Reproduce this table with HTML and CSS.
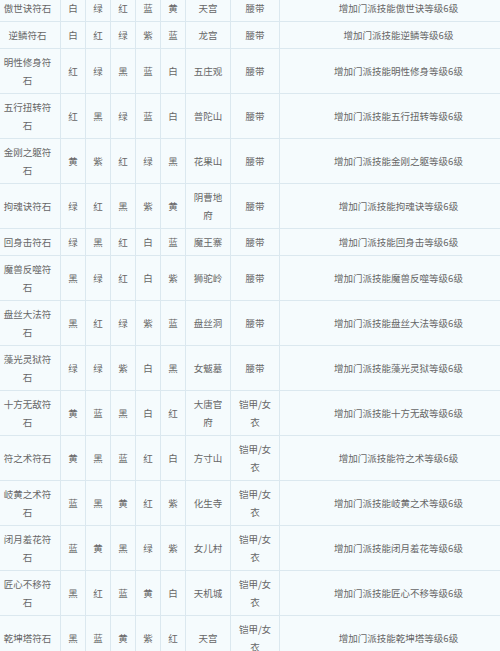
FILE: index.html
```html
<!DOCTYPE html>
<html lang="zh-CN">
<head>
<meta charset="utf-8">
<title>符石组合</title>
<link rel="stylesheet" href="styles.css">
</head>
<body>
<div class="wrap">
<table class="runes">
<colgroup>
<col class="c-name"><col class="c-color"><col class="c-color"><col class="c-color"><col class="c-color"><col class="c-color"><col class="c-sect"><col class="c-part"><col class="c-effect">
</colgroup>
<tbody>
<tr><td>傲世诀符石</td><td>白</td><td>绿</td><td>红</td><td>蓝</td><td>黄</td><td>天宫</td><td>腰带</td><td>增加门派技能傲世诀等级6级</td></tr>
<tr><td>逆鳞符石</td><td>白</td><td>红</td><td>绿</td><td>紫</td><td>蓝</td><td>龙宫</td><td>腰带</td><td>增加门派技能逆鳞等级6级</td></tr>
<tr><td>明性修身符石</td><td>红</td><td>绿</td><td>黑</td><td>蓝</td><td>白</td><td>五庄观</td><td>腰带</td><td>增加门派技能明性修身等级6级</td></tr>
<tr><td>五行扭转符石</td><td>红</td><td>黑</td><td>绿</td><td>蓝</td><td>白</td><td>普陀山</td><td>腰带</td><td>增加门派技能五行扭转等级6级</td></tr>
<tr><td>金刚之躯符石</td><td>黄</td><td>紫</td><td>红</td><td>绿</td><td>黑</td><td>花果山</td><td>腰带</td><td>增加门派技能金刚之躯等级6级</td></tr>
<tr><td>拘魂诀符石</td><td>绿</td><td>红</td><td>黑</td><td>紫</td><td>黄</td><td>阴曹地府</td><td>腰带</td><td>增加门派技能拘魂诀等级6级</td></tr>
<tr><td>回身击符石</td><td>绿</td><td>黑</td><td>红</td><td>白</td><td>蓝</td><td>魔王寨</td><td>腰带</td><td>增加门派技能回身击等级6级</td></tr>
<tr><td>魔兽反噬符石</td><td>黑</td><td>绿</td><td>红</td><td>白</td><td>紫</td><td>狮驼岭</td><td>腰带</td><td>增加门派技能魔兽反噬等级6级</td></tr>
<tr><td>盘丝大法符石</td><td>黑</td><td>红</td><td>绿</td><td>紫</td><td>蓝</td><td>盘丝洞</td><td>腰带</td><td>增加门派技能盘丝大法等级6级</td></tr>
<tr><td>藻光灵狱符石</td><td>绿</td><td>绿</td><td>紫</td><td>白</td><td>黑</td><td>女魃墓</td><td>腰带</td><td>增加门派技能藻光灵狱等级6级</td></tr>
<tr><td>十方无敌符石</td><td>黄</td><td>蓝</td><td>黑</td><td>白</td><td>红</td><td>大唐官府</td><td>铠甲/女衣</td><td>增加门派技能十方无敌等级6级</td></tr>
<tr><td>符之术符石</td><td>黄</td><td>黑</td><td>蓝</td><td>红</td><td>白</td><td>方寸山</td><td>铠甲/女衣</td><td>增加门派技能符之术等级6级</td></tr>
<tr><td>岐黄之术符石</td><td>蓝</td><td>黑</td><td>黄</td><td>红</td><td>紫</td><td>化生寺</td><td>铠甲/女衣</td><td>增加门派技能岐黄之术等级6级</td></tr>
<tr><td>闭月羞花符石</td><td>蓝</td><td>黄</td><td>黑</td><td>绿</td><td>紫</td><td>女儿村</td><td>铠甲/女衣</td><td>增加门派技能闭月羞花等级6级</td></tr>
<tr><td>匠心不移符石</td><td>黑</td><td>红</td><td>蓝</td><td>黄</td><td>白</td><td>天机城</td><td>铠甲/女衣</td><td>增加门派技能匠心不移等级6级</td></tr>
<tr><td>乾坤塔符石</td><td>黑</td><td>蓝</td><td>黄</td><td>紫</td><td>红</td><td>天宫</td><td>铠甲/女衣</td><td>增加门派技能乾坤塔等级6级</td></tr>
</tbody>
</table>
</div>
</body>
</html>
```
FILE: styles.css
```css
html, body {
  margin: 0;
  padding: 0;
  background: #f5fbfd;
}
.wrap {
  width: 500px;
  height: 651px;
  overflow: hidden;
}
.runes {
  margin: -6px 0 0 -6px;
  width: 523px;
  table-layout: fixed;
  border-collapse: collapse;
  font-family: "Noto Sans CJK SC", "Noto Sans", sans-serif;
  font-size: 9.5px;
  line-height: 18px;
  color: #666666;
  background: #f5fbfd;
}
.runes td {
  border: 1px solid #dbe8ef;
  padding: 4px 4px;
  text-align: center;
  vertical-align: middle;
}
.c-name { width: 66px; }
.c-color { width: 25px; }
.c-sect { width: 45px; }
.c-part { width: 49px; }
.c-effect { width: 238px; }
.runes td:first-child {
  padding: 4px 8px;
}
.runes td:nth-child(8) {
  padding: 4px 6px;
}
```
